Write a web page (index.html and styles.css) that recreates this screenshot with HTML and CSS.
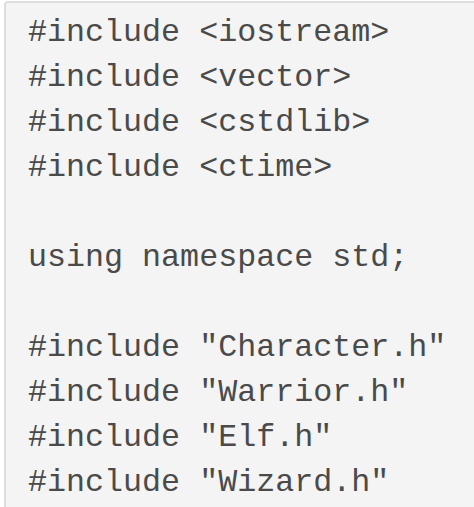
FILE: index.html
```html
<!DOCTYPE html>
<html>
<head>
<meta charset="utf-8">
<link rel="stylesheet" href="styles.css">
</head>
<body>
<div class="frame">
<pre class="code">#include &lt;iostream&gt;
#include &lt;vector&gt;
#include &lt;cstdlib&gt;
#include &lt;ctime&gt;

using namespace std;

#include "Character.h"
#include "Warrior.h"
#include "Elf.h"
#include "Wizard.h"</pre>
</div>
</body>
</html>
```
FILE: styles.css
```css
html, body {
  margin: 0;
  padding: 0;
  background: #ffffff;
}
.frame {
  overflow: hidden;
  height: 507px;
  padding: 1px 0 0 4px;
  box-sizing: border-box;
}
.code {
  margin: 0 -12px 0 0;
  border: 2px solid #dddddd;
  border-radius: 4px 0 0 0;
  background: #f4f4f4;
  padding: 8px 0 20px 22px;
  font-family: "Courier New", "Nimbus Mono PS", "FreeMono", "Liberation Mono", monospace;
  font-size: 31.7px;
  line-height: 45px;
  color: #4a4a4a;
  white-space: pre;
}
```
